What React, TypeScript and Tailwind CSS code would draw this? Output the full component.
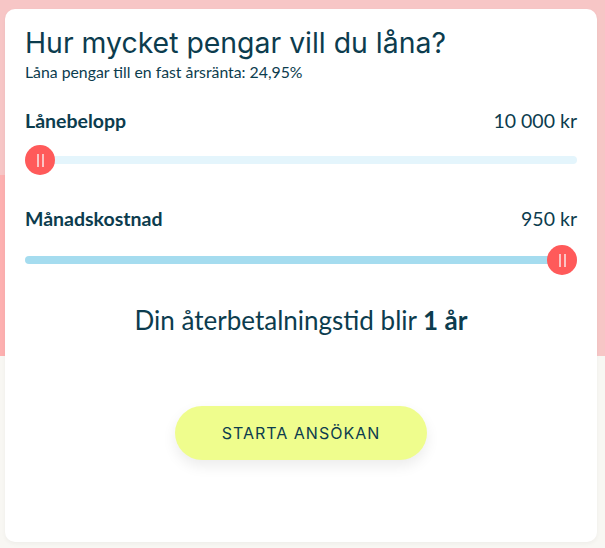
import React from "react";

const ink = "text-[#0c3c4e]";

function Slider({ pos, fill }: { pos: "start" | "end"; fill: boolean }) {
  return (
    <div className="relative flex h-[32px] items-center">
      <div className={`h-[8px] w-full rounded-full ${fill ? "bg-[#a5dcef]" : "bg-[#e4f5fc]"}`} />
      <div
        className={`absolute top-[1px] flex h-[30px] w-[30px] items-center justify-center gap-[3px] rounded-full bg-[#ff5a5a] ${
          pos === "start" ? "left-0" : "right-0"
        }`}
      >
        <span className="h-[13px] w-[2px] bg-[#fbc4c4]" />
        <span className="h-[13px] w-[2px] bg-[#fbc4c4]" />
      </div>
    </div>
  );
}

function Row({ label, value }: { label: string; value: string }) {
  return (
    <div className={`flex items-center justify-between text-[19.5px] leading-[24px] ${ink}`} style={{ fontFamily: "Lato, sans-serif" }}>
      <span className="font-bold">{label}</span>
      <span>{value}</span>
    </div>
  );
}

export default function App() {
  return (
    <div className="relative h-[548px] w-[605px] overflow-hidden bg-[#f8f7f3]">
      {/* pink backdrop band */}
      <div className="absolute inset-x-0 top-0 h-[356px] bg-[#f7c6c6]">
        <div className="absolute left-0 top-[175px] h-[181px] w-[6px] bg-[#fdb0b0]" />
      </div>

      <div className="relative ml-[5px] mt-[9px] flex h-[533px] w-[592px] flex-col rounded-[10px] bg-white px-5 pt-[17px] shadow-[0_2px_4px_rgba(0,0,0,0.04)]">
        <h1 className={`text-[28.4px] leading-[33px] ${ink}`} style={{ fontFamily: "Inter, 'Open Sans', sans-serif" }}>
          Hur mycket pengar vill du låna?
        </h1>
        <p className={`mt-[4px] text-[15.8px] leading-[18px] ${ink}`} style={{ fontFamily: "Lato, sans-serif" }}>
          Låna pengar till en fast årsränta: 24,95%
        </p>

        <div className="mt-[28px]">
          <Row label="Lånebelopp" value="10 000 kr" />
        </div>
        <div className="mt-[11px]">
          <Slider pos="start" fill={false} />
        </div>

        <div className="mt-[31px]">
          <Row label="Månadskostnad" value="950 kr" />
        </div>
        <div className="mt-[13px]">
          <Slider pos="end" fill={true} />
        </div>

        <p className={`mt-[28px] text-center text-[26px] leading-[32px] ${ink}`} style={{ fontFamily: "Lato, sans-serif" }}>
          Din återbetalningstid blir <span className="font-bold">1 år</span>
        </p>

        <div className="mt-[70px] flex justify-center">
          <button
            className={`h-[54px] w-[252px] rounded-full bg-[#effd8d] text-[16px] tracking-[1px] shadow-[0_6px_14px_rgba(0,0,0,0.08)] ${ink}`}
            style={{ fontFamily: "Inter, 'Open Sans', sans-serif" }}
          >
            STARTA ANSÖKAN
          </button>
        </div>
      </div>
    </div>
  );
}
